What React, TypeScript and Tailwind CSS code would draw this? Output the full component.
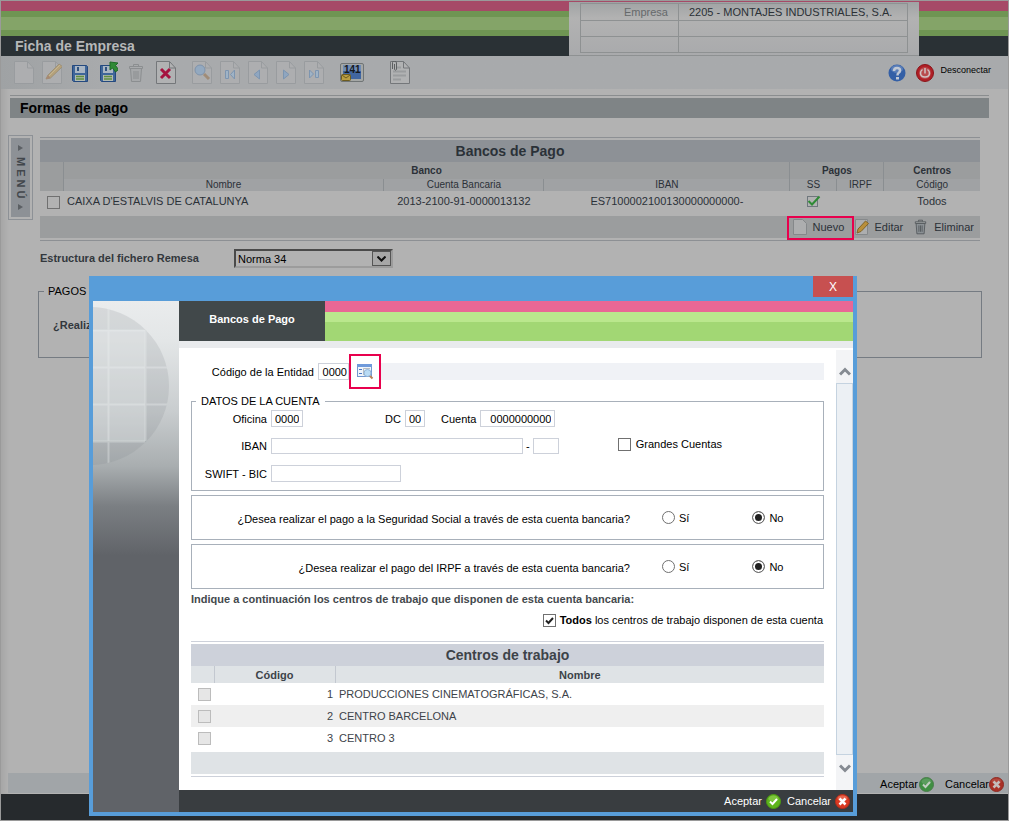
import type { ReactNode } from "react";
import { useState } from "react";
import clsx from "clsx";

const centros = [
  { codigo: 1, nombre: "PRODUCCIONES CINEMATOGRÁFICAS, S.A." },
  { codigo: 2, nombre: "CENTRO BARCELONA" },
  { codigo: 3, nombre: "CENTRO 3" },
];

/* ---------- icons ---------- */

function PageIcon({
  children,
  strong,
}: {
  children?: ReactNode;
  strong?: boolean;
}) {
  return (
    <svg width="20" height="24" viewBox="0 0 20 24" fill="none">
      <path
        d="M.5 .5H13.5L19.5 7V22.5H.5Z"
        fill={strong ? "#b1b2b3" : "#adaeb0"}
        stroke={strong ? "#74777a" : "#999c9f"}
      />
      <path d="M13.5 .5V7H19.5" stroke={strong ? "#74777a" : "#999c9f"} />
      {children}
    </svg>
  );
}

function Pencil() {
  return (
    <g>
      <path d="M4 18L6 14L17 3L20.5 5.5L8.5 17Z" fill="#b5a17a" stroke="#9c917a" />
      <path d="M7 15L18 4" stroke="#c3b592" />
      <path d="M4 18L6 14L8.5 17Z" fill="#a88872" />
    </g>
  );
}

function SaveIcon({ arrow }: { arrow?: boolean }) {
  return (
    <svg width="20" height="24" viewBox="0 0 20 24" fill="none">
      <path d="M2.5 4.5H16.5L17.5 5.5V20.5H3.5L2.5 19.5Z" fill="#3f6699" stroke="#24497f" />
      <rect x="5" y="5" width="10" height="7" fill="#aab6c3" />
      <rect x="7" y="6" width="2" height="4" fill="#30537f" />
      <rect x="5" y="14" width="10" height="6" fill="#b2bab2" />
      <path d="M6 15.500H14M6 18H14" stroke="#5f8f3f" strokeWidth="1.500" />
      {arrow && (
        <path
          d="M12 2L20 1V9L17.500 7L14.500 11L11.500 8.500L14.500 4.500Z"
          transform="matrix(-1 0 0 1 32 0)"
          fill="#2f8a35"
          stroke="#1e6a26"
        />
      )}
    </svg>
  );
}

function TrashIcon({ faded }: { faded?: boolean }) {
  const line = faded ? "#8b8e90" : "#4c5256";
  return (
    <svg
      width={faded ? 16 : 13}
      height={faded ? 20 : 16}
      viewBox="0 0 16 20"
      fill="none"
      stroke={line}
    >
      <path d="M2.500 5.500L3.500 18.500H12.500L13.500 5.500Z" fill={faded ? "#a6a8aa" : "#8b9195"} />
      <path d="M1.500 3.500H14.500V5.500H1.500Z" fill="#a9abad" />
      <path d="M5.500 3V1.500H10.500V3M6 8V16M8 8V16M10 8V16" />
    </svg>
  );
}

function CheckBall({ dim }: { dim?: boolean }) {
  return (
    <svg width="15" height="15" viewBox="0 0 15 15" fill="none">
      <circle cx="7.500" cy="7.500" r="7" fill={dim ? "#3f8f42" : "#5fb41d"} stroke={dim ? "#4a7d4b" : "#4c9a12"} />
      <ellipse cx="7.500" cy="4.500" rx="5" ry="3" fill={dim ? "#6da56f" : "#93d455"} opacity=".6" />
      <path d="M4 7.500L6.500 10L11 5" stroke={dim ? "#c2cdc2" : "#fff"} strokeWidth="2" />
    </svg>
  );
}

function CrossBall({ dim }: { dim?: boolean }) {
  return (
    <svg width="15" height="15" viewBox="0 0 15 15" fill="none">
      <circle cx="7.500" cy="7.500" r="7" fill={dim ? "#a93127" : "#d93a22"} stroke={dim ? "#8e2a22" : "#b92c18"} />
      <ellipse cx="7.500" cy="4" rx="5" ry="2.500" fill={dim ? "#b9564c" : "#f0806a"} opacity=".6" />
      <path d="M4.500 4.500L10.500 10.500M10.500 4.500L4.500 10.500" stroke={dim ? "#c4bcbb" : "#fff"} strokeWidth="2.500" />
    </svg>
  );
}

function LookupIcon() {
  return (
    <svg width="17" height="16" viewBox="0 0 17 16" fill="none">
      <rect x=".5" y=".5" width="14" height="12" fill="#eef4fb" stroke="#7398cf" />
      <rect x="0" y="0" width="15" height="3" fill="#6f9adb" />
      <path d="M2 5.500H5M2 9.500H5" stroke="#4b79c4" />
      <path d="M6.500 11V4.500H13" stroke="#b7bcc2" />
      <circle cx="10.500" cy="9" r="3.500" fill="#b9dbf4" stroke="#8fb4d8" />
      <path d="M13 12L15.500 14.500" stroke="#b98258" strokeWidth="2" />
    </svg>
  );
}

function Globe() {
  return (
    <svg width="86" height="170" viewBox="0 0 86 170" fill="none">
      <defs>
        <clipPath id="globe">
          <circle cx="-3" cy="85" r="79" />
        </clipPath>
      </defs>
      <g clipPath="url(#globe)">
        <rect width="86" height="170" fill="#7d868c" opacity=".18" />
        <rect y="29" width="52" height="111" fill="#f2f4f5" opacity=".3" />
        <path
          d="M15.500 0V170M0 29.500H52M0 66.500H86M0 103.500H86M0 140.500H52M52.500 29V140"
          stroke="#eef0f1"
          strokeWidth="2"
          opacity=".35"
        />
      </g>
    </svg>
  );
}

/* ---------- small pieces ---------- */

function ToolButton({ label, children }: { label: string; children: ReactNode }) {
  return (
    <button type="button" aria-label={label} className="flex h-6 min-w-5 items-center justify-center">
      {children}
    </button>
  );
}

function HeaderStripes() {
  return (
    <div>
      <div className="h-[10px] bg-[#a64a67]" />
      <div className="h-[6px] bg-[#6f9553]" />
      <div className="h-[13px] bg-[#84a468]" />
      <div className="h-[6px] bg-[#6f9553]" />
    </div>
  );
}

function Checkbox({
  id,
  defaultChecked,
  disabled,
  dim,
  label,
}: {
  id?: string;
  defaultChecked?: boolean;
  disabled?: boolean;
  dim?: boolean;
  label?: string;
}) {
  return (
    <span className="relative block size-[13px] shrink-0">
      <input
        id={id}
        type="checkbox"
        aria-label={label}
        defaultChecked={defaultChecked}
        disabled={disabled}
        className={clsx(
          "peer block size-[13px] appearance-none border",
          disabled ? "border-[#bcbcbc] bg-[#e6e6e6]" : "border-[#707070]",
          dim && "border-[#4e4e4e] bg-[#b2b2b2]",
          !disabled && !dim && "bg-white"
        )}
      />
      <svg
        className="pointer-events-none absolute inset-0 hidden peer-checked:block"
        width="13"
        height="13"
        viewBox="0 0 13 13"
        fill="none"
      >
        <path d="M3 6.500L5.500 9L10 4" stroke="#212121" strokeWidth="2" />
      </svg>
    </span>
  );
}

function Radio({
  name,
  label,
  checked,
  onChange,
}: {
  name: string;
  label: string;
  checked: boolean;
  onChange: () => void;
}) {
  return (
    <label className="flex items-center gap-1">
      <input
        type="radio"
        name={name}
        checked={checked}
        onChange={onChange}
        className="size-[13px] appearance-none rounded-full border border-[#707070] bg-white checked:bg-[#212121] checked:shadow-[inset_0_0_0_2px_white]"
      />
      {label}
    </label>
  );
}

function YesNo({ name, question }: { name: string; question: string }) {
  const [value, setValue] = useState("no");

  return (
    <div
      role="radiogroup"
      aria-label={question}
      className="mt-1 flex h-[45px] items-center border border-[#a8b0ba]"
    >
      <p className="w-[438px] shrink-0 pt-[2px] text-right">{question}</p>
      <div className="ml-8 flex gap-[63px]">
        <Radio name={name} label="Sí" checked={value == "si"} onChange={() => setValue("si")} />
        <Radio name={name} label="No" checked={value == "no"} onChange={() => setValue("no")} />
      </div>
    </div>
  );
}

/* ---------- page behind the dialog ---------- */

function Header() {
  return (
    <header className="flex h-[55px] bg-[#a9aaac]">
      <div className="flex-1">
        <HeaderStripes />
        <h1 className="h-5 bg-[#2a3135] pl-[14px] text-[14px] leading-5 font-bold text-[#b6b8b9]">
          Ficha de Empresa
        </h1>
      </div>
      <div className="w-[350px] border-t border-b border-t-[#a64a67] border-b-[#8e9192] bg-linear-to-b from-[#a0a3a4] via-[#b2b2b2] via-30% to-[#a9aaac] px-[11px]">
        <table className="mt-px w-full table-fixed border-collapse border border-[#8e9192] text-[11px] leading-[14px]">
          <tbody>
            <tr className="h-[17px]">
              <th className="w-[98px] border border-[#8e9192] pr-[10px] text-right font-normal text-[#66696b]">
                Empresa
              </th>
              <td className="border border-[#8e9192] pl-[10px] whitespace-nowrap text-[#2b3136]">
                2205 - MONTAJES INDUSTRIALES, S.A.
              </td>
            </tr>
            <tr className="h-4">
              <td className="border border-[#8e9192]" />
              <td className="border border-[#8e9192]" />
            </tr>
            <tr className="h-4">
              <td className="border border-[#8e9192]" />
              <td className="border border-[#8e9192]" />
            </tr>
          </tbody>
        </table>
      </div>
      <div className="w-[89px]">
        <HeaderStripes />
        <div className="h-5 bg-[#2a3135]" />
      </div>
    </header>
  );
}

function Toolbar() {
  return (
    <div className="flex h-[33px] items-center bg-linear-to-r from-[#9fa2a4] to-[#a8aaac] to-10% pr-[17px] pl-[13px]">
      <div className="flex gap-2">
        <ToolButton label="Nuevo">
          <PageIcon />
        </ToolButton>
        <ToolButton label="Editar">
          <PageIcon>
            <Pencil />
          </PageIcon>
        </ToolButton>
        <ToolButton label="Guardar">
          <SaveIcon />
        </ToolButton>
        <ToolButton label="Guardar y salir">
          <SaveIcon arrow />
        </ToolButton>
        <ToolButton label="Papelera">
          <TrashIcon faded />
        </ToolButton>
      </div>
      <div className="ml-[10px]">
        <ToolButton label="Eliminar ficha">
          <PageIcon strong>
            <path d="M5 8L14 17M14 8L5 17" stroke="#a5123f" strokeWidth="3" />
          </PageIcon>
        </ToolButton>
      </div>
      <div className="ml-4 flex gap-2">
        <ToolButton label="Buscar">
          <PageIcon>
            <circle cx="8" cy="9" r="5" fill="#93a9c0" stroke="#7f93ab" />
            <path d="M12 13L17 18" stroke="#a08c78" strokeWidth="3" />
          </PageIcon>
        </ToolButton>
        <ToolButton label="Primero">
          <PageIcon>
            <path d="M5.500 9.500H8.500V17.500H5.500ZM14.500 9V18L10.500 13.500Z" fill="#9fb3c6" stroke="#7d95b0" />
          </PageIcon>
        </ToolButton>
        <ToolButton label="Anterior">
          <PageIcon>
            <path d="M11.500 9V18L6 13.500Z" fill="#8fa6c0" stroke="#7d95b0" />
          </PageIcon>
        </ToolButton>
        <ToolButton label="Siguiente">
          <PageIcon>
            <path d="M7.500 9V18L13 13.500Z" fill="#8fa6c0" stroke="#7d95b0" />
          </PageIcon>
        </ToolButton>
        <ToolButton label="Último">
          <PageIcon>
            <path d="M5.500 9V17L9.500 13ZM11.500 9.500H14.500V16.500H11.500Z" fill="#9fb3c6" stroke="#7d95b0" />
          </PageIcon>
        </ToolButton>
      </div>
      <button type="button" className="relative ml-4" aria-label="Mensajes 141">
        <svg width="24" height="20" viewBox="0 0 24 20" fill="none">
          <rect x=".5" y=".5" width="23" height="18" rx="1.500" fill="#a4a7a6" stroke="#707576" />
          <rect x="3" y="2" width="18" height="14" fill="#4166a0" />
          <rect x="3" y="2" width="18" height="6" fill="#6f8cb5" />
          <rect x="1.500" y="11.500" width="9" height="6" rx="1" fill="#b99e42" stroke="#6d5c20" />
          <path d="M2 12L6 15L10 12" stroke="#6d5c20" />
        </svg>
        <span className="absolute top-0 left-1 text-[10px] leading-[14px] font-bold text-[#16191c]">
          141
        </span>
      </button>
      <div className="ml-[26px]">
        <ToolButton label="Adjuntos">
          <PageIcon strong>
            <path d="M6 6.500H11M3 10.500H16M3 14.500H16M3 18.500H11" stroke="#9a9c9e" strokeWidth="2" />
            <path d="M2.500 8V1.500Q2.500 0 4 0Q6.500 0 6.500 2V8.500Q5 10 4.500 8.500V3" stroke="#5c5f61" />
          </PageIcon>
        </ToolButton>
      </div>
      <button type="button" aria-label="Ayuda" className="ml-auto">
        <svg width="18" height="18" viewBox="0 0 18 18" fill="none">
          <circle cx="9" cy="9" r="8.500" fill="#335fa6" />
          <ellipse cx="9" cy="5" rx="6" ry="4" fill="#7592c4" opacity=".6" />
          <path d="M6 7Q6 4 9 4Q12 4 12 6.500Q12 8 10.500 9Q9.500 9.500 9.500 11.500" stroke="#c0c8d4" strokeWidth="2.500" />
          <rect x="8" y="13" width="3" height="2.500" fill="#c0c8d4" />
        </svg>
      </button>
      <button type="button" className="ml-[10px] flex items-center gap-[6px] text-[9px] text-black">
        <svg width="18" height="18" viewBox="0 0 18 18" fill="none">
          <circle cx="9" cy="9" r="8.500" fill="#b01f26" stroke="#8b1419" />
          <circle cx="9" cy="9" r="6" fill="#b94b4d" />
          <path d="M6.500 5.500Q4.500 7 4.500 9Q4.500 13 9 13Q13.500 13 13.500 9Q13.500 7 11.500 5.500M9 4V9.500" stroke="#d0c3c4" strokeWidth="1.500" />
        </svg>
        <span className="pb-[3px]">Desconectar</span>
      </button>
    </div>
  );
}

function BanksTable() {
  const divider = "border-r border-[#8a8e91]";

  return (
    <div className="border-y border-[#8d9094] py-[2px]">
      <table className="w-full table-fixed border-collapse text-center text-[11px] leading-[12px] text-[#2b3138]">
        <colgroup>
          <col className="w-[23px]" />
          <col />
          <col className="w-[160px]" />
          <col className="w-[246px]" />
          <col className="w-[47px]" />
          <col className="w-[47px]" />
          <col className="w-24" />
        </colgroup>
        <thead>
          <tr className="h-[22px] bg-[#8d9196] text-[14px]">
            <th colSpan={7}>Bancos de Pago</th>
          </tr>
          <tr className="h-[17px] bg-[#9b9d9e] text-[10px]">
            <th rowSpan={2} className={divider} />
            <th colSpan={3} className={divider}>
              Banco
            </th>
            <th colSpan={2} className={divider}>
              Pagos
            </th>
            <th>Centros</th>
          </tr>
          <tr className="h-3 bg-[#a0a2a4] text-[10px]">
            <th className={clsx(divider, "font-normal")}>Nombre</th>
            <th className={clsx(divider, "font-normal")}>Cuenta Bancaria</th>
            <th className={clsx(divider, "font-normal")}>IBAN</th>
            <th className={clsx(divider, "font-normal")}>SS</th>
            <th className={clsx(divider, "font-normal")}>IRPF</th>
            <th className="font-normal">Código</th>
          </tr>
        </thead>
        <tbody>
          <tr className="h-[25px]">
            <td className="pb-[3px] pl-[7px]">
              <Checkbox dim label="Seleccionar CAIXA D'ESTALVIS DE CATALUNYA" />
            </td>
            <td className="pb-[5px] pl-1 text-left">CAIXA D'ESTALVIS DE CATALUNYA</td>
            <td className="pb-[5px]">2013-2100-91-0000013132</td>
            <td className="pb-[5px]">ES7100002100130000000000-</td>
            <td className="pb-[5px]">
              <svg className="mx-auto" width="15" height="13" viewBox="0 0 15 13" fill="none">
                <rect x="1.500" y="1.500" width="10" height="10" stroke="#6f777d" />
                <path d="M2.500 6L6 9.500L13.500 1.500" stroke="#2f8a35" strokeWidth="2" />
              </svg>
            </td>
            <td />
            <td className="pb-[5px]">Todos</td>
          </tr>
        </tbody>
        <tfoot>
          <tr className="bg-[#9b9d9e]">
            <td colSpan={7}>
              <div className="flex h-[22px] items-start justify-end pr-[6px]">
                <button
                  type="button"
                  className="flex h-6 w-[67px] shrink-0 items-center gap-[6px] border-2 border-[#e8004d] pb-[2px] pl-1"
                >
                  <svg width="14" height="16" viewBox="0 0 14 16" fill="none">
                    <path d="M.5 .5H9.500L13.500 4.500V15.500H.5Z" fill="#adaeaf" stroke="#85888a" />
                  </svg>
                  Nuevo
                </button>
                <button type="button" className="flex h-[22px] items-center gap-[6px] pl-px">
                  <svg width="14" height="16" viewBox="0 0 14 16" fill="none">
                    <path d="M.5 .5H12.500V15.500H.5Z" fill="#adaeaf" stroke="#85888a" />
                    <path d="M2 14L3 10L10.500 2L13.500 4.500L6 12.500Z" fill="#b98f3a" stroke="#806429" />
                  </svg>
                  Editar
                </button>
                <button type="button" className="ml-[11px] flex h-[22px] items-center gap-[7px]">
                  <TrashIcon />
                  Eliminar
                </button>
              </div>
            </td>
          </tr>
        </tfoot>
      </table>
    </div>
  );
}

function CompanyPage() {
  return (
    <div className="flex min-h-screen flex-col border border-[#9a9a9a] bg-[linear-gradient(90deg,#a6a6a6,#b2b2b2_8px)]">
      <Header />
      <Toolbar />

      <div className="mt-[6px] mr-[19px] ml-[9px] border-t border-[#8a8d8f] pt-[2px]">
        <h2 className="h-5 bg-[#7f8486] pl-[10px] text-[14px] leading-5 font-bold text-black">
          Formas de pago
        </h2>
      </div>

      <main className="mt-[17px] flex flex-1 items-start pr-[26px] pl-[7px]">
        <button
          type="button"
          className="h-[85px] w-[25px] shrink-0 border border-[#8d9196] p-[2px] text-[11px] font-bold text-[#42474c]"
        >
          <span className="flex h-full flex-col items-center justify-between bg-[#8d9196] py-[7px]">
            <svg width="5" height="6" viewBox="0 0 5 6">
              <path d="M0 0L5 3L0 6Z" fill="#5c6064" />
            </svg>
            <span className="leading-3 [writing-mode:vertical-rl]">M E N Ú</span>
            <svg width="5" height="6" viewBox="0 0 5 6">
              <path d="M0 0L5 3L0 6Z" fill="#5c6064" />
            </svg>
          </span>
        </button>

        <div className="min-w-0 flex-1 pt-[2px] pl-[5px] text-[11px] leading-[14px]">
          <div className="mr-[2px] ml-[2px]">
            <BanksTable />
            <div className="mt-2 flex items-center">
              <label htmlFor="norma" className="w-[194px] pb-[2px] font-bold text-[#33383d]">
                Estructura del fichero Remesa
              </label>
              <div className="relative">
                <select
                  id="norma"
                  className="block h-[19px] w-[159px] appearance-none border-2 border-t-[#4a4a4a] border-r-[#9c9c9c] border-b-[#9c9c9c] border-l-[#4a4a4a] bg-[#b2b2b2] pl-[2px] text-[11px] text-black"
                >
                  <option>Norma 34</option>
                </select>
                <span className="pointer-events-none absolute top-[2px] right-[2px] flex h-[15px] w-[19px] items-center justify-center border border-[#555] bg-[#a7a7a7]">
                  <svg width="9" height="6" viewBox="0 0 9 6" fill="none">
                    <path d="M.5 .5L4.500 4.500L8.500 .5" stroke="#111" strokeWidth="2" />
                  </svg>
                </span>
              </div>
            </div>
          </div>

          <fieldset className="mt-4 h-[74px] border border-[#757b82]">
            <legend className="ml-[5px] px-1 text-black">PAGOS</legend>
            <p className="pt-[20px] pl-[14px] font-bold text-[#33383d]">¿Realizar pagos?</p>
          </fieldset>
        </div>
      </main>

      <div className="ml-[7px] flex h-5 items-center justify-end bg-[#a1a5a8] pr-1 text-[11px] text-black">
        <button type="button" className="flex items-center gap-px pt-[2px]">
          Aceptar
          <CheckBall dim />
        </button>
        <button type="button" className="ml-[11px] flex items-center pt-[2px]">
          Cancelar
          <CrossBall dim />
        </button>
      </div>
      <footer className="mt-px h-[26px] bg-[#262a2d]" />
    </div>
  );
}

/* ---------- dialog ---------- */

const inputClass = "border border-[#cdd1da] bg-white px-[3px] text-right text-[11px] text-black";

function AccountFields() {
  return (
    <fieldset className="mt-[6px] h-24 border border-[#a8b0ba]">
      <legend className="ml-1 px-[5px] leading-3">DATOS DE LA CUENTA</legend>
      <div className="flex justify-between pt-[3px] pr-[101px]">
        <div>
          <div className="flex items-center">
            <label htmlFor="oficina" className="w-[75px] text-right">
              Oficina
            </label>
            <input id="oficina" defaultValue="0000" className={clsx(inputClass, "ml-1 h-[17px] w-8")} />
            <label htmlFor="dc" className="w-[98px] text-right">
              DC
            </label>
            <input id="dc" defaultValue="00" className={clsx(inputClass, "ml-1 h-[17px] w-5")} />
            <label htmlFor="cuenta" className="ml-4">
              Cuenta
            </label>
            <input id="cuenta" defaultValue="0000000000" className={clsx(inputClass, "ml-1 h-[17px] w-[75px]")} />
          </div>
          <div className="mt-[11px] flex items-center">
            <label htmlFor="iban" className="w-[75px] text-right">
              IBAN
            </label>
            <input id="iban" className={clsx(inputClass, "mr-[3px] ml-1 h-4 w-[252px]")} />
            -
            <input aria-label="IBAN, continuación" className={clsx(inputClass, "ml-[3px] h-4 w-[26px]")} />
          </div>
          <div className="mt-[11px] flex items-center">
            <label htmlFor="swift" className="w-[75px] text-right">
              SWIFT - BIC
            </label>
            <input id="swift" className={clsx(inputClass, "ml-1 h-[17px] w-[130px]")} />
          </div>
        </div>
        <div className="flex items-center gap-[5px] self-center pb-1">
          <Checkbox id="grandes" />
          <label htmlFor="grandes">Grandes Cuentas</label>
        </div>
      </div>
    </fieldset>
  );
}

function CentersTable() {
  const divider = "border-r border-[#c3c8d0]";

  return (
    <div className="mt-[13px] border-y border-[#cdd1da] py-[2px]">
      <table className="w-full table-fixed border-collapse text-[11px] leading-[14px] text-[#3d4349]">
        <colgroup>
          <col className="w-[23px]" />
          <col className="w-[121px]" />
          <col />
        </colgroup>
        <thead>
          <tr className="h-[22px] bg-[#cdd1da] text-[14px]">
            <th colSpan={3}>Centros de trabajo</th>
          </tr>
          <tr className="h-[17px] bg-[#dfe3e6]">
            <th className={divider} />
            <th className={divider}>Código</th>
            <th>Nombre</th>
          </tr>
        </thead>
        <tbody>
          {centros.map((c) => (
            <tr key={c.codigo} className="h-[22px] even:bg-[#efefef]">
              <td className="pl-[7px]">
                <Checkbox disabled label={c.nombre} />
              </td>
              <td className="pr-[2px] text-right">{c.codigo}</td>
              <td className="pl-1">{c.nombre}</td>
            </tr>
          ))}
        </tbody>
      </table>
      <div className="mt-[3px] h-[22px] bg-[#dfe3e6]" />
    </div>
  );
}

function BankDialog() {
  return (
    <div
      role="dialog"
      aria-label="Bancos de Pago"
      className="min-w-[700px] flex-1 border-4 border-t-0 border-[#589dd9] bg-white text-[11px] leading-[14px] text-black"
    >
      <div className="flex h-[25px] items-start justify-end bg-[#589dd9]">
        <button type="button" className="h-[21px] w-10 bg-[#c75050] text-[12px] text-white" aria-label="Cerrar">
          X
        </button>
      </div>

      <div className="flex">
        <aside className="w-[86px] shrink-0 bg-[linear-gradient(#eaeced,#e3e6e7_40px,#c9cdcf_110px,#a9aeb0_165px,#7b7f83_205px,#606368_255px)]">
          <Globe />
        </aside>

        <div className="flex min-w-0 flex-1 flex-col">
          <div className="flex h-10">
            <h2 className="w-[146px] bg-[#41484a] pt-[11px] text-center font-bold text-white">
              Bancos de Pago
            </h2>
            <div className="flex-1">
              <div className="h-[11px] bg-[#e96795]" />
              <div className="h-[10px] bg-[#bae78d]" />
              <div className="h-[19px] bg-[#a2d774]" />
            </div>
          </div>
          <div className="h-[7px] bg-[#e9ebed]" />

          <div className="flex pt-[2px]">
            <form className="min-w-0 flex-1 px-3 pt-1 pb-[13px]" onSubmit={(e) => e.preventDefault()}>
              <div className="flex items-center">
                <label htmlFor="entidad" className="w-[123px] text-right">
                  Código de la Entidad
                </label>
                <input id="entidad" defaultValue="0000" className={clsx(inputClass, "ml-1 h-[17px] w-[31px] px-px")} />
                <button
                  type="button"
                  aria-label="Buscar entidad"
                  className="flex h-[35px] w-8 shrink-0 items-center justify-center border-2 border-[#e8004d]"
                >
                  <LookupIcon />
                </button>
                <output className="h-[17px] flex-1 bg-[#f0f2f6]" />
              </div>

              <AccountFields />
              <YesNo
                name="ss"
                question="¿Desea realizar el pago a la Seguridad Social a través de esta cuenta bancaria?"
              />
              <YesNo
                name="irpf"
                question="¿Desea realizar el pago del IRPF a través de esta cuenta bancaria?"
              />

              <p className="mt-[3px] font-bold text-[#44494d]">
                Indique a continuación los centros de trabajo que disponen de esta cuenta bancaria:
              </p>
              <div className="mt-[7px] flex items-center justify-end gap-1 pr-px">
                <Checkbox id="todos" defaultChecked />
                <label htmlFor="todos">
                  <b>Todos</b> los centros de trabajo disponen de esta cuenta
                </label>
              </div>

              <div className="pt-px">
                <CentersTable />
              </div>
            </form>

            <div className="flex w-[17px] flex-col bg-[#f3f4f6]">
              <button type="button" aria-label="Subir" className="flex h-[33px] items-center justify-center pt-[10px]">
                <svg width="12" height="9" viewBox="0 0 12 9" fill="none">
                  <path d="M1 7.500L6 2.500L11 7.500" stroke="#868b92" strokeWidth="3" />
                </svg>
              </button>
              <div className="flex-1 border border-[#c5d3e0] bg-[#ecf0f4]" />
              <button type="button" aria-label="Bajar" className="flex h-[35px] justify-center pt-[9px]">
                <svg width="12" height="9" viewBox="0 0 12 9" fill="none">
                  <path d="M1 1.500L6 6.500L11 1.500" stroke="#868b92" strokeWidth="3" />
                </svg>
              </button>
            </div>
          </div>

          <div className="flex h-[22px] items-center justify-end gap-[6px] bg-[#393d40] pr-[3px] text-white">
            <button type="button" className="flex items-center gap-1">
              Aceptar
              <CheckBall />
            </button>
            <button type="button" className="flex items-center gap-1">
              Cancelar
              <CrossBall />
            </button>
          </div>
        </div>
      </div>
    </div>
  );
}

export default function App() {
  return (
    <div className="relative font-['Liberation_Sans',Arial,sans-serif]">
      <CompanyPage />
      <div className="absolute inset-x-0 top-0 flex pt-[276px] pr-[152px] pl-[89px]">
        <BankDialog />
      </div>
    </div>
  );
}
